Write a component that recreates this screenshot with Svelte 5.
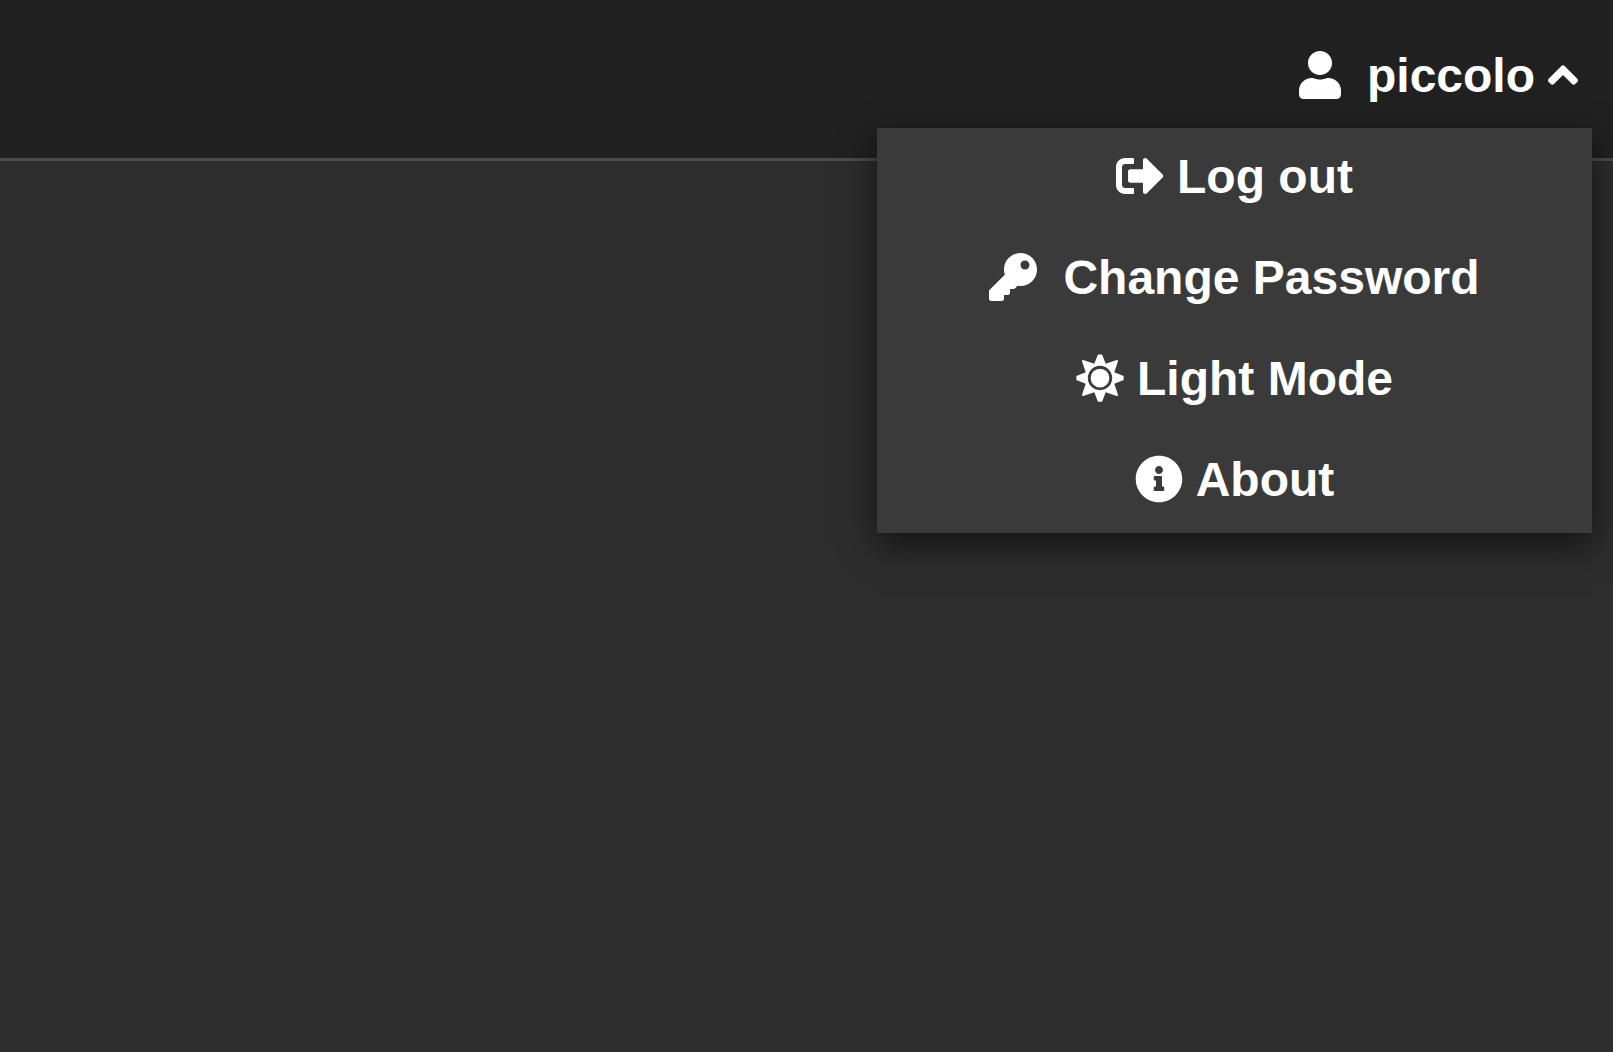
<script>
  let open = $state(true);

  const icons = {
    user: {
      width: 448,
      path: 'M224 256c70.7 0 128-57.3 128-128S294.7 0 224 0 96 57.3 96 128s57.3 128 128 128zm89.6 32h-16.7c-22.2 10.2-46.9 16-72.9 16s-50.6-5.8-72.9-16h-16.7C60.2 288 0 348.2 0 422.4V464c0 26.5 21.5 48 48 48h352c26.5 0 48-21.5 48-48v-41.6c0-74.2-60.2-134.4-134.4-134.4z'
    },
    angleUp: {
      width: 320,
      path: 'M177 159.7l136 136c9.4 9.4 9.4 24.6 0 33.9l-22.6 22.6c-9.4 9.4-24.6 9.4-33.9 0L160 255.9l-96.4 96.4c-9.4 9.4-24.6 9.4-33.9 0L7 329.7c-9.4-9.4-9.4-24.6 0-33.9l136-136c9.4-9.5 24.6-9.5 34-.1z'
    },
    signOut: {
      width: 512,
      path: 'M497 273L329 441c-15 15-41 4.5-41-17v-96H152c-13.3 0-24-10.7-24-24v-96c0-13.3 10.7-24 24-24h136V88c0-21.4 25.9-32 41-17l168 168c9.3 9.4 9.3 24.6 0 34zM192 436v-40c0-6.6-5.4-12-12-12H96c-17.7 0-32-14.3-32-32V160c0-17.7 14.3-32 32-32h84c6.6 0 12-5.4 12-12V76c0-6.6-5.4-12-12-12H96c-53 0-96 43-96 96v192c0 53 43 96 96 96h84c6.6 0 12-5.4 12-12z'
    },
    key: {
      width: 512,
      path: 'M512 176.001C512 273.203 433.202 352 336 352c-11.22 0-22.19-1.062-32.827-3.069l-24.012 27.014A23.999 23.999 0 0 1 261.223 384H224v40c0 13.255-10.745 24-24 24h-40v40c0 13.255-10.745 24-24 24H24c-13.255 0-24-10.745-24-24v-78.059c0-6.365 2.529-12.47 7.029-16.971l161.802-161.802C163.108 213.814 160 195.271 160 176 160 78.798 238.797.001 335.999 0 433.488-.001 512 78.511 512 176.001zM336 128c0 26.51 21.49 48 48 48s48-21.49 48-48-21.49-48-48-48-48 21.49-48 48z'
    },
    sun: {
      width: 512,
      path: 'M234 4h44l39 100 118-40q14-1 13 13l-40 118 100 39v44l-100 39 40 118q1 14-13 13l-118-40-39 100h-44l-39-100-118 40q-14 1-13-13l40-118-100-39v-44l100-39-40-118q-1-14 13-13l118 40zM256 126a130 130 0 1 0 0 260a130 130 0 1 0 0-260zM256 156a100 100 0 1 0 0 200a100 100 0 1 0 0-200z'
    },
    info: {
      width: 512,
      path: 'M256 8C119.043 8 8 119.083 8 256c0 136.997 111.043 248 248 248s248-111.003 248-248C504 119.083 392.957 8 256 8zm0 110c23.196 0 42 18.804 42 42s-18.804 42-42 42-42-18.804-42-42 18.804-42 42-42zm56 254c0 6.627-5.373 12-12 12h-88c-6.627 0-12-5.373-12-12v-24c0-6.627 5.373-12 12-12h12v-64h-12c-6.627 0-12-5.373-12-12v-24c0-6.627 5.373-12 12-12h64c6.627 0 12 5.373 12 12v100h12c6.627 0 12 5.373 12 12v24z'
    }
  };

  const items = [
    { label: 'Log out', icon: icons.signOut },
    { label: 'Change Password', icon: icons.key, wide: true },
    { label: 'Light Mode', icon: icons.sun },
    { label: 'About', icon: icons.info }
  ];
</script>

{#snippet glyph(icon)}
  <svg class="icon" viewBox="0 0 {icon.width} 512" aria-hidden="true">
    <path d={icon.path} />
  </svg>
{/snippet}

<div class="page">
  <header>
    <nav class="account">
      <button class="trigger" aria-expanded={open} onclick={() => (open = !open)}>
        <span class="name">{@render glyph(icons.user)}piccolo</span>
        {@render glyph(icons.angleUp)}
      </button>
      {#if open}
        <ul class="menu">
          {#each items as item}
            <li>
              <button class="item" class:wide={item.wide}>
                {@render glyph(item.icon)}
                {item.label}
              </button>
            </li>
          {/each}
        </ul>
      {/if}
    </nav>
  </header>
</div>

<style>
  :global(body) {
    margin: 0;
    background: #2d2d2d;
  }

  .page {
    min-height: 100vh;
    background: #2d2d2d;
  }

  header {
    display: flex;
    justify-content: flex-end;
    padding: 48px 21px 54px;
    background: #212121;
    border-bottom: 3px solid #4b4b4b;
  }

  .account {
    position: relative;
  }

  button {
    display: flex;
    align-items: center;
    gap: 13px;
    margin: 0;
    border: 0;
    background: none;
    color: #fff;
    font: bold 48px/56px 'Liberation Sans', Arial, sans-serif;
    cursor: pointer;
  }

  .trigger {
    padding: 0 14px;
  }

  .name {
    display: flex;
    align-items: center;
    gap: 26px;
  }

  .icon {
    flex: none;
    height: 48px;
    margin-bottom: 2px;
    fill: currentColor;
    fill-rule: evenodd;
  }

  .menu {
    position: absolute;
    top: 80px;
    right: 0;
    box-sizing: border-box;
    width: 715px;
    max-width: calc(100vw - 42px);
    margin: 0;
    padding: 0 0 1px;
    list-style: none;
    background: #3a3a3a;
    box-shadow: 0 12px 34px rgba(0, 0, 0, 0.6);
  }

  .item {
    justify-content: center;
    width: 100%;
    padding: 21px 0 24px;
  }

  .item.wide {
    gap: 26px;
  }
</style>
